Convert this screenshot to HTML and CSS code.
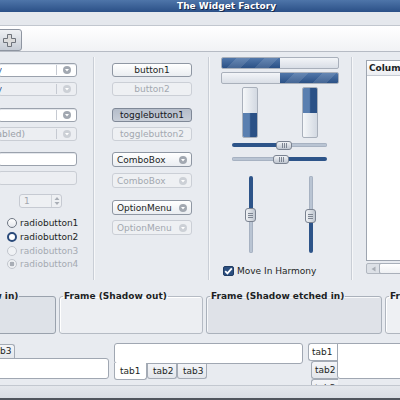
FILE: index.html
```html
<!DOCTYPE html>
<html>
<head>
<meta charset="utf-8">
<title>The Widget Factory</title>
<link rel="stylesheet" href="styles.css">
</head>
<body>
<div class="win">
  <div class="titlebar">The Widget Factory</div>
  <div class="menubar"></div>
  <div class="toolbar">
    <div class="tbtn">
      <svg width="13" height="13" viewBox="0 0 13 13"><path d="M4.5 0.5h4v4h4v4h-4v4h-4v-4h-4v-4h4z" fill="#dcdcdc" stroke="#6e737b" stroke-width="1"/></svg>
    </div>
  </div>

  <div class="main">
    <!-- column 1 -->
    <div class="col col1">
      <div class="combo c-first">
        <div class="clip clip-a"><span class="blue">comboboxentry</span></div>
        <div class="cfill"></div>
        <div class="cbtn"><svg width="8" height="8" viewBox="0 0 8 8"><circle cx="4" cy="4" r="4"/><path d="M2 3h4L4 5.6z" fill="#fff"/></svg></div>
      </div>
      <div class="combo dis c-gap5">
        <div class="clip clip-a"><span class="blue">comboboxentry</span></div>
        <div class="cfill"></div>
        <div class="cbtn"><svg width="8" height="8" viewBox="0 0 8 8"><circle cx="4" cy="4" r="4"/><path d="M2 3h4L4 5.6z" fill="#fff"/></svg></div>
      </div>
      <div class="combo c-gap12">
        <div class="cfill"></div>
        <div class="cbtn"><svg width="8" height="8" viewBox="0 0 8 8"><circle cx="4" cy="4" r="4"/><path d="M2 3h4L4 5.6z" fill="#fff"/></svg></div>
      </div>
      <div class="combo dis c-gap5">
        <div class="clip clip-b"><span class="gray">(disabled)</span></div>
        <div class="cfill"></div>
        <div class="cbtn"><svg width="8" height="8" viewBox="0 0 8 8"><circle cx="4" cy="4" r="4"/><path d="M2 3h4L4 5.6z" fill="#fff"/></svg></div>
      </div>
      <div class="entry c-gap11"></div>
      <div class="entry dis c-gap5"></div>
      <div class="spin">
        <span class="spin-val">1</span>
        <span class="spin-btns">
          <svg width="6" height="10" viewBox="0 0 6 10"><path d="M0.5 4L3 1l2.5 3z M0.5 6L3 9l2.5-3z" fill="#a9aeb6"/></svg>
        </span>
      </div>
      <div class="radios">
        <div class="radio"><span class="rb"></span><span>radiobutton1</span></div>
        <div class="radio"><span class="rb on"></span><span>radiobutton2</span></div>
        <div class="radio dis"><span class="rb"></span><span>radiobutton3</span></div>
        <div class="radio dis"><span class="rb dot"></span><span>radiobutton4</span></div>
      </div>
    </div>
    <div class="vsep"></div>

    <!-- column 2 -->
    <div class="col col2">
      <div class="btn m11">button1</div>
      <div class="btn dis m5">button2</div>
      <div class="btn pressed m12">togglebutton1</div>
      <div class="btn dis m5">togglebutton2</div>
      <div class="btn opt m11"><span>ComboBox</span><svg width="8" height="8" viewBox="0 0 8 8"><circle cx="4" cy="4" r="4"/><path d="M2 3h4L4 5.6z" fill="#fff"/></svg></div>
      <div class="btn opt dis m6"><span>ComboBox</span><svg width="8" height="8" viewBox="0 0 8 8"><circle cx="4" cy="4" r="4"/><path d="M2 3h4L4 5.6z" fill="#fff"/></svg></div>
      <div class="btn opt m14"><span>OptionMenu</span><svg width="8" height="8" viewBox="0 0 8 8"><circle cx="4" cy="4" r="4"/><path d="M2 3h4L4 5.6z" fill="#fff"/></svg></div>
      <div class="btn opt dis m5"><span>OptionMenu</span><svg width="8" height="8" viewBox="0 0 8 8"><circle cx="4" cy="4" r="4"/><path d="M2 3h4L4 5.6z" fill="#fff"/></svg></div>
    </div>
    <div class="vsep"></div>

    <!-- column 3 -->
    <div class="col col3">
      <div class="hprog p1"><div class="hfill" style="width:50%"></div></div>
      <div class="hprog p2"><div class="hgap"></div><div class="hfill" style="width:50%"></div></div>
      <div class="vprogs">
        <div class="vprog"><div class="vgap"></div><div class="vfill" style="height:50%"></div></div>
        <div class="vprog"><div class="vfill" style="height:50%"></div><div class="vgap"></div></div>
      </div>
      <div class="hscale">
        <div class="htrack"><div class="hfilled" style="width:50%"></div><div class="hempty"></div></div>
        <div class="hhandle" style="left:44px"><i></i><i></i><i></i></div>
      </div>
      <div class="hscale">
        <div class="htrack"><div class="hempty" style="width:48%"></div><div class="hfilled rest"></div></div>
        <div class="hhandle" style="left:41px"><i></i><i></i><i></i></div>
      </div>
      <div class="vscales">
        <div class="vscale">
          <div class="vtrack"><div class="vfilled" style="height:45%"></div><div class="vempty"></div></div>
          <div class="vhandle" style="top:32px"><i></i><i></i><i></i></div>
        </div>
        <div class="vscale">
          <div class="vtrack"><div class="vempty" style="height:45%"></div><div class="vfilled rest"></div></div>
          <div class="vhandle" style="top:33px"><i></i><i></i><i></i></div>
        </div>
      </div>
      <div class="check">
        <span class="cb"><svg width="9" height="8" viewBox="0 0 9 8"><path d="M1.2 4.2L3.4 6.4L7.8 1.4" fill="none" stroke="#fff" stroke-width="1.8"/></svg></span>
        <span>Move In Harmony</span>
      </div>
    </div>
    <div class="vsep"></div>

    <!-- column 4 -->
    <div class="col col4">
      <div class="tree">
        <div class="thead">Column</div>
        <div class="tbody"></div>
      </div>
      <div class="hscroll">
        <div class="sarrow"><svg width="5" height="6" viewBox="0 0 5 6"><path d="M4.5 0.5v5L0.5 3z" fill="#a9aeb6"/></svg></div>
        <div class="sthumb"></div>
      </div>
    </div>
  </div>

  <div class="frames">
    <fieldset class="frame f-in f-first"><legend>Frame (Shadow in)</legend></fieldset>
    <fieldset class="frame f-out"><legend>Frame (Shadow out)</legend></fieldset>
    <fieldset class="frame f-etched"><legend>Frame (Shadow etched in)</legend></fieldset>
    <fieldset class="frame f-eout"><legend>Frame (Shadow etched out)</legend></fieldset>
  </div>

  <div class="notebooks">
    <div class="nb nb1">
      <div class="tabs top">
        <div class="tab active">tab1</div>
        <div class="tab">tab2</div>
        <div class="tab">tab3</div>
      </div>
      <div class="panel p-top"></div>
    </div>
    <div class="nb nb2">
      <div class="panel p-bottom"></div>
      <div class="tabs bottom">
        <div class="tab active">tab1</div>
        <div class="tab">tab2</div>
        <div class="tab">tab3</div>
      </div>
    </div>
    <div class="nb nb3">
      <div class="tabs left">
        <div class="tab active">tab1</div>
        <div class="tab">tab2</div>
        <div class="tab">tab3</div>
      </div>
      <div class="panel p-left"></div>
    </div>
  </div>

  <div class="statusbar"></div>
</div>
</body>
</html>
```

FILE: styles.css
```css
* { box-sizing: border-box; margin: 0; padding: 0; }
html, body { width: 400px; height: 400px; overflow: hidden; }
body {
  font-family: "DejaVu Sans", "Liberation Sans", sans-serif;
  font-size: 9px;
  line-height: 12px;
  color: #1c1f24;
  background: #e8ebf0;
}
.win { display: flex; flex-direction: column; width: 400px; height: 400px; }

.titlebar {
  height: 12px;
  flex: none;
  background: linear-gradient(#4e75a9, #2b5087);
  color: #fff;
  font-weight: bold;
  line-height: 12px;
  padding-left: 177px;
  white-space: nowrap;
  text-shadow: 1px 1px 0 #17294a;
}
.menubar { height: 14px; flex: none; background: #e5e8ed; border-bottom: 1px solid #c2c7cf; }
.toolbar {
  height: 26px; flex: none;
  background: linear-gradient(#ffffff, #f1f2f5);
  border-bottom: 1px solid #b6bbc4;
  padding-top: 3px;
}
.tbtn {
  width: 26px; height: 22px; margin-left: -4px;
  border: 1px solid #8e95a1; border-radius: 3px;
  background: linear-gradient(#eef0f3, #c6ccd5);
  display: flex; align-items: center; justify-content: center;
}

/* main area */
.main { height: 231px; flex: none; display: flex; }
.col { display: flex; flex-direction: column; flex: none; }
.vsep {
  width: 2px; flex: none;
  margin: 5px 0 3px;
  border-left: 1px solid #c9ced6;
  border-right: 1px solid #f6f7f9;
}
.col1 { width: 93px; overflow: hidden; }
.col2 { width: 113px; padding-left: 17px; }
.col3 { width: 141px; padding-left: 11px; }
.col4 { width: 47px; padding-left: 13px; overflow: hidden; }

.blue { color: #2f5a92; }
.gray { color: #9aa0a8; }

/* combos & entries */
.combo, .entry {
  display: flex; flex: none;
  width: 79px; height: 14px; margin-left: -2px;
  border: 1px solid #9ba2ad; border-radius: 3px;
  background: #fff;
  box-shadow: inset 0 1px 0 #e4e7ec;
}
.combo.dis, .entry.dis { background: #eceef2; border-color: #c9cdd4; box-shadow: none; }
.c-first { margin-top: 11px; }
.c-gap5 { margin-top: 5px; }
.c-gap11 { margin-top: 11px; }
.c-gap12 { margin-top: 12px; }
.clip { display: flex; justify-content: flex-end; overflow: hidden; white-space: nowrap; flex: none; line-height: 12px; }
.clip-a { width: 3px; }
.clip-b { width: 26px; }
.cfill { flex: 1; }
.cbtn {
  width: 20px; flex: none;
  border-left: 1px solid #c6cad2;
  margin: 1px 0;
  display: flex; align-items: center; justify-content: center;
}
.cbtn circle, .opt circle { fill: #a2a8b1; }
.dis .cbtn circle, .opt.dis circle { fill: #ccd0d6; }

/* spin */
.spin {
  display: flex; align-items: center;
  width: 43px; height: 14px; margin: 9px 0 0 19px; flex: none;
  border: 1px solid #c6cad2; border-radius: 3px;
  background: #eef0f3;
}
.spin-val { flex: 1; padding-left: 4px; color: #a2a7af; }
.spin-btns {
  width: 10px; height: 12px;
  border-left: 1px solid #d0d4da;
  display: flex; align-items: center; justify-content: center;
}

/* radios */
.radios { display: flex; flex-direction: column; margin: 8px 0 0 7px; }
.radio { display: flex; align-items: center; gap: 3px; height: 14px; color: #1c1f24; }
.radio.dis { color: #a5aab2; }
.radio:nth-child(3) { height: 13px; }
.rb {
  width: 10px; height: 10px; flex: none;
  border-radius: 50%;
  border: 1px solid #6f7783;
  background: linear-gradient(#ffffff, #e4e7ec);
}
.rb.on { border: 2.5px solid #2a4a7a; background: #fff; }
.dis .rb { border-color: #c2c6cd; background: #f0f2f5; }
.rb.dot { background: radial-gradient(circle, #a9aeb6 0 2.2px, #eef0f3 2.6px); }

/* buttons column 2 */
.btn {
  width: 80px; height: 14px; flex: none;
  border: 1px solid #8f97a3; border-radius: 3px;
  background: linear-gradient(#ffffff, #eaedf1);
  text-align: center; line-height: 12px;
  color: #1c1f24;
}
.btn.dis { border-color: #cbcfd6; background: #eef0f3; color: #a3a8b0; }
.btn.pressed { border-color: #7f8897; background: linear-gradient(#b5bdca, #c8ced8); color: #15181d; }
.btn.opt { display: flex; align-items: center; justify-content: space-between; padding: 0 4px 0 4px; text-align: left; height: 15px; }
.m5 { margin-top: 5px; }
.m6 { margin-top: 6px; }
.m11 { margin-top: 11px; }
.m12 { margin-top: 12px; }
.m14 { margin-top: 12px; }

/* progress */
.hprog {
  display: flex; width: 118px; height: 12px; flex: none;
  border: 1px solid #a9b0bb; border-radius: 2px;
  background: linear-gradient(#f3f5f8, #d9dee6);
  overflow: hidden;
}
.p1 { margin-top: 5px; }
.p2 { margin-top: 3px; }
.hgap { flex: 1; }
.hfill {
  height: 100%;
  background:
    repeating-linear-gradient(135deg, rgba(255,255,255,0) 0 10px, rgba(255,255,255,0.12) 10px 20px),
    linear-gradient(#5177aa, #2b5186);
}
.vprogs { display: flex; gap: 44px; padding-left: 21px; margin-top: 3px; }
.vprog {
  display: flex; flex-direction: column;
  width: 16px; height: 51px;
  border: 1px solid #a9b0bb; border-radius: 2px;
  background: linear-gradient(90deg, #f5f7f9, #d3d9e2);
  overflow: hidden;
}
.vgap { flex: 1; }
.vfill { background: linear-gradient(90deg, #5a7fb0 0 45%, #2b5186 55%); }

/* horizontal scales */
.hscale { position: relative; width: 95px; height: 14px; margin-left: 11px; flex: none; }
.htrack {
  position: absolute; left: 0; right: 0; top: 5px; height: 4px;
  display: flex; border-radius: 2px; overflow: hidden;
}
.hfilled { background: #2d5489; height: 100%; }
.hfilled.rest { flex: 1; }
.hempty { flex: 1; background: #b9c4d3; border: 1px solid #a7b2c2; height: 100%; }
.hscale .hempty[style] { flex: none; }
.hhandle {
  position: absolute; top: 3px; width: 16px; height: 9px;
  border: 1px solid #7b8391; border-radius: 3px;
  background: linear-gradient(#f0f2f5, #bfc6d0);
  display: flex; align-items: center; justify-content: center; gap: 1px;
}
.hhandle i { display: block; width: 1px; height: 5px; background: #7d8592; }

/* vertical scales */
.vscales { display: flex; gap: 49px; padding-left: 24px; margin-top: 10px; }
.vscale { position: relative; width: 11px; height: 77px; }
.vtrack {
  position: absolute; top: 0; bottom: 0; left: 4px; width: 4px;
  display: flex; flex-direction: column; border-radius: 2px; overflow: hidden;
}
.vfilled { background: #2d5489; width: 100%; }
.vfilled.rest { flex: 1; }
.vempty { flex: 1; background: #b9c4d3; border: 1px solid #a7b2c2; }
.vscale .vempty[style] { flex: none; }
.vhandle {
  position: absolute; left: 0; width: 11px; height: 14px;
  border: 1px solid #7b8391; border-radius: 3px;
  background: linear-gradient(90deg, #f0f2f5, #bfc6d0);
  display: flex; flex-direction: column; align-items: center; justify-content: center; gap: 1px;
}
.vhandle i { display: block; width: 5px; height: 1px; background: #7d8592; }

.check { display: flex; align-items: center; gap: 3px; margin: 12px 0 0 2px; height: 11px; }
.cb {
  width: 11px; height: 10px;
  border-radius: 2px; background: #2c4f80; border: 1px solid #203c63;
  display: flex; align-items: center; justify-content: center;
}

/* tree */
.tree {
  width: 60px; height: 201px; margin-top: 8px; flex: none;
  border: 1px solid #9ea5b0;
  background: #fff;
}
.thead {
  height: 15px;
  background: linear-gradient(#ffffff, #eceef2);
  border-bottom: 1px solid #c6cbd3;
  font-weight: bold; padding-left: 2px; line-height: 14px;
  white-space: nowrap;
}
.hscroll {
  display: flex; width: 60px; height: 11px; margin-top: 2px; flex: none;
  border: 1px solid #b1b7c0; border-radius: 2px; background: #dde1e7;
}
.sarrow { width: 12px; display: flex; align-items: center; justify-content: center; }
.sthumb { flex: 1; background: linear-gradient(#ffffff, #eef0f3); border: 1px solid #a9b0ba; border-radius: 2px; margin: -1px 0; }

/* frames */
.frames { height: 58px; flex: none; display: flex; gap: 3px; align-items: flex-start; }
.frame {
  flex: none;
  margin-top: 8px;
  height: 43px;
  border: 1px solid #a5acb6;
  border-radius: 3px;
  padding: 0 3px;
  min-width: 0;
}
.frame legend {
  font-weight: bold; line-height: 11px;
  padding: 0 1px; white-space: nowrap;
  color: #1c1f24;
}
.f-first { margin-left: -82px; width: 138px; }
.f-in { background: #dee2e8; border-color: #9aa2ad; }
.f-out { width: 144px; background: #eceef2; border-color: #b5bbc4; box-shadow: inset 1px 1px 0 #fff; }
.f-etched { width: 176px; background: #dfe2e8; border-color: #aab1bb; box-shadow: inset 1px 1px 0 #f7f8fa; }
.f-eout { width: 120px; background: #eef0f3; border-color: #b0b6bf; box-shadow: inset 1px 1px 0 #fff; }

/* notebooks */
.notebooks { height: 44px; flex: none; display: flex; align-items: flex-start; overflow: hidden; }
.nb { flex: none; display: flex; }
.nb1 { flex-direction: column; width: 189px; margin: 1px 0 0 -80px; }
.nb2 { flex-direction: column; width: 189px; margin: 2px 0 0 5px; }
.nb3 { width: 110px; margin: 2px 0 0 5px; }
.tabs { display: flex; }
.tabs.top { align-items: flex-end; padding-left: 2px; height: 17px; }
.tabs.bottom { align-items: flex-start; }
.tabs.left { flex-direction: column; align-items: flex-end; width: 30px; }
.tab {
  border: 1px solid #a4abb5;
  background: linear-gradient(#f4f5f8, #e3e6eb);
  padding: 0 5px; line-height: 13px;
  color: #1c1f24;
}
.tabs.top .tab { width: 30px; height: 15px; border-bottom: none; border-radius: 3px 3px 0 0; }
.tabs.top .tab.active { width: 33px; height: 17px; background: #fff; }
.tabs.bottom .tab { width: 30px; height: 15px; border-top: none; border-radius: 0 0 3px 3px; padding-top: 1px; }
.tabs.bottom .tab.active { width: 33px; height: 17px; background: #fff; padding-top: 2px; margin-top: -1px; }
.tabs.left .tab { width: 27px; height: 18px; border-right: none; border-radius: 3px 0 0 3px; padding: 2px 0 0 3px; }
.tabs.left .tab.active { width: 30px; background: #fff; }
.panel { background: #fff; border: 1px solid #a0a7b2; border-radius: 3px; }
.p-top { height: 21px; margin-top: -1px; }
.p-bottom { height: 21px; }
.p-left { width: 80px; height: 36px; margin-left: -1px; border-top-left-radius: 0; }

.statusbar {
  height: 15px; flex: none;
  border-top: 1px solid #c3c8d0;
  background: linear-gradient(#e4e7ec, #d9dde3);
  border-bottom: 2px solid #50555d;
}
```
